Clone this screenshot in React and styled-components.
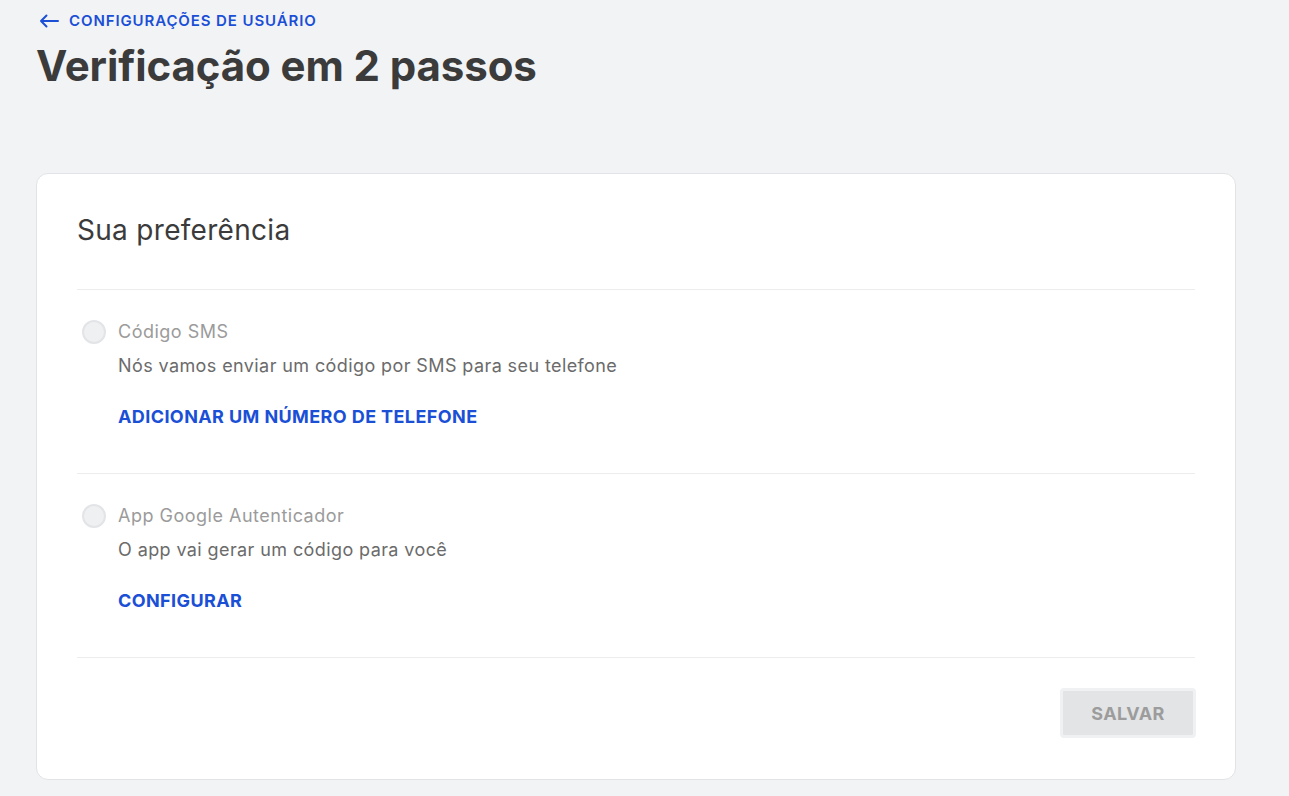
import React from "react";
import styled, { createGlobalStyle } from "styled-components";

const Global = createGlobalStyle`
  html, body { margin: 0; padding: 0; background: #f2f3f5; }
  body { font-family: Inter, "Noto Sans", sans-serif; -webkit-font-smoothing: antialiased; }
  * { box-sizing: border-box; }
`;

const Page = styled.div`
  padding: 10px 53px 18px 36px;
  min-height: 796px;
`;

const BackLink = styled.a`
  display: inline-flex;
  align-items: center;
  gap: 10px;
  color: #1a4fd6;
  font-size: 15px;
  font-weight: 600;
  letter-spacing: 0.9px;
  text-decoration: none;
  line-height: 22px;
  margin-left: 3px;
`;

const Title = styled.h1`
  margin: 9px 0 0;
  font-size: 42px;
  line-height: 50px;
  font-weight: 700;
  color: #3b3b3b;
  letter-spacing: -0.1px;
`;

const Card = styled.section`
  margin-top: 82px;
  background: #fff;
  border: 1px solid #e2e3e6;
  border-radius: 12px;
  padding: 38px 40px 41px 40px;
`;

const CardTitle = styled.h2`
  margin: 0;
  font-size: 28px;
  line-height: 36px;
  font-weight: 400;
  letter-spacing: 0.3px;
  color: #3b3b3b;
  padding-bottom: 41px;
  border-bottom: 1px solid #ececee;
`;

const Option = styled.div`
  padding: 30px 0 44px;
  border-bottom: 1px solid #ececee;
  display: flex;
  flex-direction: column;
`;

const OptionHead = styled.label`
  display: flex;
  align-items: center;
  gap: 12px;
  padding-left: 5px;
  font-size: 18px;
  line-height: 24px;
  letter-spacing: 0.5px;
  color: #9b9b9b;
`;

const Radio = styled.span`
  width: 24px;
  height: 24px;
  border-radius: 50%;
  background: #eef0f2;
  border: 2px solid #e2e4e7;
  flex-shrink: 0;
`;

const Desc = styled.p`
  margin: 10px 0 0 41px;
  font-size: 18px;
  line-height: 24px;
  letter-spacing: 0.4px;
  color: #6b6b6b;
`;

const ActionLink = styled.a`
  margin: 27px 0 0 41px;
  font-size: 18px;
  line-height: 24px;
  font-weight: 700;
  letter-spacing: 0.4px;
  color: #1a4fd6;
  text-decoration: none;
  align-self: flex-start;
`;

const Footer = styled.div`
  display: flex;
  justify-content: flex-end;
  padding-top: 30px;
`;

const SaveButton = styled.button`
  width: 136px;
  height: 50px;
  border: 3px solid #f0f1f3;
  border-radius: 4px;
  background: #e3e4e6;
  color: #9c9c9c;
  font-family: inherit;
  font-size: 18px;
  font-weight: 700;
  letter-spacing: 0.4px;
  margin-right: -1px;
`;

const Arrow = () => (
  <svg width="20" height="14" viewBox="0 0 20 14" fill="none">
    <path d="M19 7H2M7.5 1.5L2 7l5.5 5.5" stroke="#1a4fd6" strokeWidth="2" strokeLinecap="round" strokeLinejoin="round" />
  </svg>
);

const options = [
  {
    title: "Código SMS",
    desc: "Nós vamos enviar um código por SMS para seu telefone",
    action: "ADICIONAR UM NÚMERO DE TELEFONE",
  },
  {
    title: "App Google Autenticador",
    desc: "O app vai gerar um código para você",
    action: "CONFIGURAR",
  },
];

export default function App() {
  return (
    <Page>
      <Global />
      <BackLink href="#">
        <Arrow />
        CONFIGURAÇÕES DE USUÁRIO
      </BackLink>
      <Title>Verificação em 2 passos</Title>
      <Card>
        <CardTitle>Sua preferência</CardTitle>
        {options.map((o) => (
          <Option key={o.title}>
            <OptionHead>
              <Radio />
              {o.title}
            </OptionHead>
            <Desc>{o.desc}</Desc>
            <ActionLink href="#">{o.action}</ActionLink>
          </Option>
        ))}
        <Footer>
          <SaveButton disabled>SALVAR</SaveButton>
        </Footer>
      </Card>
    </Page>
  );
}
